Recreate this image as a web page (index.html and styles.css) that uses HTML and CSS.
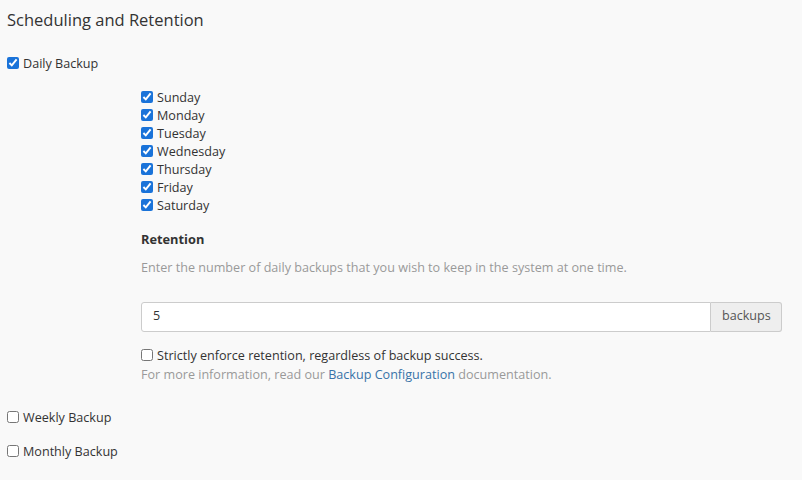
FILE: index.html
```html
<!DOCTYPE html>
<html>
<head>
<meta charset="utf-8">
<link rel="stylesheet" href="styles.css">
</head>
<body>
<div class="page">
  <h2 class="title">Scheduling and Retention</h2>
  <label class="check top daily"><input type="checkbox" checked><span>Daily Backup</span></label>
  <div class="sub">
    <div class="days">
      <label class="check day"><input type="checkbox" checked><span>Sunday</span></label>
      <label class="check day"><input type="checkbox" checked><span>Monday</span></label>
      <label class="check day"><input type="checkbox" checked><span>Tuesday</span></label>
      <label class="check day"><input type="checkbox" checked><span>Wednesday</span></label>
      <label class="check day"><input type="checkbox" checked><span>Thursday</span></label>
      <label class="check day"><input type="checkbox" checked><span>Friday</span></label>
      <label class="check day"><input type="checkbox" checked><span>Saturday</span></label>
    </div>
    <div class="retention-label">Retention</div>
    <div class="help">Enter the number of daily backups that you wish to keep in the system at one time.</div>
    <div class="input-group">
      <input class="field" type="text" value="5">
      <span class="addon">backups</span>
    </div>
    <label class="check day strict"><input type="checkbox"><span>Strictly enforce retention, regardless of backup success.</span></label>
    <div class="help info">For more information, read our <a href="#">Backup Configuration</a> documentation.</div>
  </div>
  <label class="check top weekly"><input type="checkbox"><span>Weekly Backup</span></label>
  <label class="check top monthly"><input type="checkbox"><span>Monthly Backup</span></label>
</div>
</body>
</html>
```

FILE: styles.css
```css
html, body {
  margin: 0;
  padding: 0;
  background: #f9f9f9;
}
body {
  font-family: "Open Sans", "Liberation Sans", sans-serif;
  font-size: 12.6px;
  color: #333333;
}
.page {
  padding: 8px 7px 0 7px;
  display: flex;
  flex-direction: column;
  align-items: flex-start;
}
.title {
  margin: 0;
  font-size: 16.5px;
  font-weight: 400;
  line-height: 24px;
  color: #333333;
}
.check {
  display: flex;
  align-items: flex-start;
  height: 18px;
}
.check input {
  width: 12px;
  height: 12px;
  margin: 3px 4px 0 0;
  accent-color: #1a73d9;
}
.check span {
  line-height: 18px;
  padding-top: 1px;
}
.daily {
  margin-top: 22px;
}
.sub {
  padding-left: 134px;
  display: flex;
  flex-direction: column;
  align-items: stretch;
  width: 641px;
}
.days {
  margin-top: 16px;
  display: flex;
  flex-direction: column;
}
.retention-label {
  margin-top: 15px;
  font-weight: 700;
  font-size: 12.8px;
  line-height: 20px;
}
.help {
  color: #999999;
  line-height: 18px;
}
.retention-label + .help {
  margin-top: 10px;
}
.input-group {
  margin-top: 25px;
  display: flex;
  height: 30px;
}
.field {
  flex: 1;
  border: 1px solid #cccccc;
  border-radius: 3px 0 0 3px;
  background: #ffffff;
  font-family: inherit;
  font-size: 12.6px;
  color: #333333;
  padding: 0 11px 4px 11px;
  margin: 0;
  outline: none;
  box-sizing: border-box;
  height: 30px;
}
.addon {
  display: flex;
  align-items: center;
  padding: 0 11px 4px 11px;
  border: 1px solid #cccccc;
  border-left: none;
  border-radius: 0 3px 3px 0;
  background: #eeeeee;
  color: #555555;
  box-sizing: border-box;
  width: 71px;
}
.strict {
  margin-top: 14px;
}
.info {
  margin-top: 2px;
}
.info a {
  color: #3873a8;
  text-decoration: none;
}
.weekly {
  margin-top: 24px;
}
.monthly {
  margin-top: 16px;
}
```
